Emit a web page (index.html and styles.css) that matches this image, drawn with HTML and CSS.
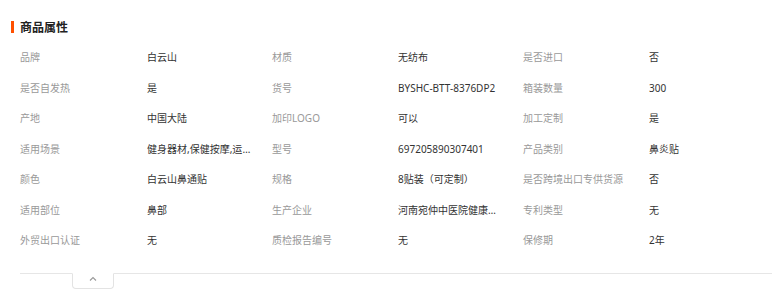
FILE: index.html
```html
<!DOCTYPE html>
<html lang="zh">
<head>
<meta charset="utf-8">
<link rel="stylesheet" href="styles.css">
</head>
<body>
<div class="panel">
  <h2 class="title">商品属性</h2>
  <div class="attrs">
    <div class="k">品牌</div><div class="v">白云山</div>
    <div class="k">材质</div><div class="v">无纺布</div>
    <div class="k">是否进口</div><div class="v">否</div>

    <div class="k">是否自发热</div><div class="v">是</div>
    <div class="k">货号</div><div class="v">BYSHC-BTT-8376DP2</div>
    <div class="k">箱装数量</div><div class="v">300</div>

    <div class="k">产地</div><div class="v">中国大陆</div>
    <div class="k">加印LOGO</div><div class="v">可以</div>
    <div class="k">加工定制</div><div class="v">是</div>

    <div class="k">适用场景</div><div class="v">健身器材,保健按摩,运动护具</div>
    <div class="k">型号</div><div class="v">697205890307401</div>
    <div class="k">产品类别</div><div class="v">鼻炎贴</div>

    <div class="k">颜色</div><div class="v">白云山鼻通贴</div>
    <div class="k">规格</div><div class="v">8贴装（可定制）</div>
    <div class="k">是否跨境出口专供货源</div><div class="v">否</div>

    <div class="k">适用部位</div><div class="v">鼻部</div>
    <div class="k">生产企业</div><div class="v">河南宛仲中医院健康管理有限公司</div>
    <div class="k">专利类型</div><div class="v">无</div>

    <div class="k">外贸出口认证</div><div class="v">无</div>
    <div class="k">质检报告编号</div><div class="v">无</div>
    <div class="k">保修期</div><div class="v">2年</div>
  </div>
  <div class="foot">
    <div class="fold">
      <svg width="8" height="5" viewBox="0 0 8 5"><path d="M1 4.5 L4 1.5 L7 4.5" fill="none" stroke="#999" stroke-width="1.1"/></svg>
    </div>
  </div>
</div>
</body>
</html>
```

FILE: styles.css
```css
html, body {
  margin: 0;
  padding: 0;
  background: #fff;
}
body {
  font-family: "Noto Sans", "Noto Sans CJK SC", sans-serif;
  color: #333;
}
.panel {
  width: 772px;
  padding-top: 19px;
}
.title {
  display: flex;
  align-items: center;
  margin: 0;
  padding-left: 11px;
  height: 16px;
  font-family: "Noto Sans CJK SC", sans-serif;
  font-size: 12px;
  font-weight: bold;
  color: #222;
  line-height: 16px;
}
.title::before {
  content: "";
  display: block;
  width: 3px;
  height: 12px;
  background: #ff5000;
  margin-right: 6px;
}
.attrs {
  display: grid;
  grid-template-columns: 127px 125px 126px 125px 126px 1fr;
  grid-auto-rows: 30.5px;
  padding-left: 20px;
  margin-top: 7px;
  font-size: 10px;
  line-height: 30.5px;
}
.k {
  color: #999;
  white-space: nowrap;
}
.v {
  color: #333;
  white-space: nowrap;
  overflow: hidden;
  text-overflow: ellipsis;
  padding-right: 19px;
}
.foot {
  margin-top: 17px;
  margin-left: 20px;
  border-top: 1px solid #e6e6e6;
  height: 20px;
}
.fold {
  margin-left: 52px;
  margin-top: -1px;
  width: 42px;
  height: 16px;
  border: 1px solid #e3e3e3;
  border-top: 1px solid #fff;
  border-radius: 0 0 4px 4px;
  display: flex;
  justify-content: center;
  padding-top: 2px;
  box-sizing: border-box;
}
.fold svg {
  display: block;
}
```
